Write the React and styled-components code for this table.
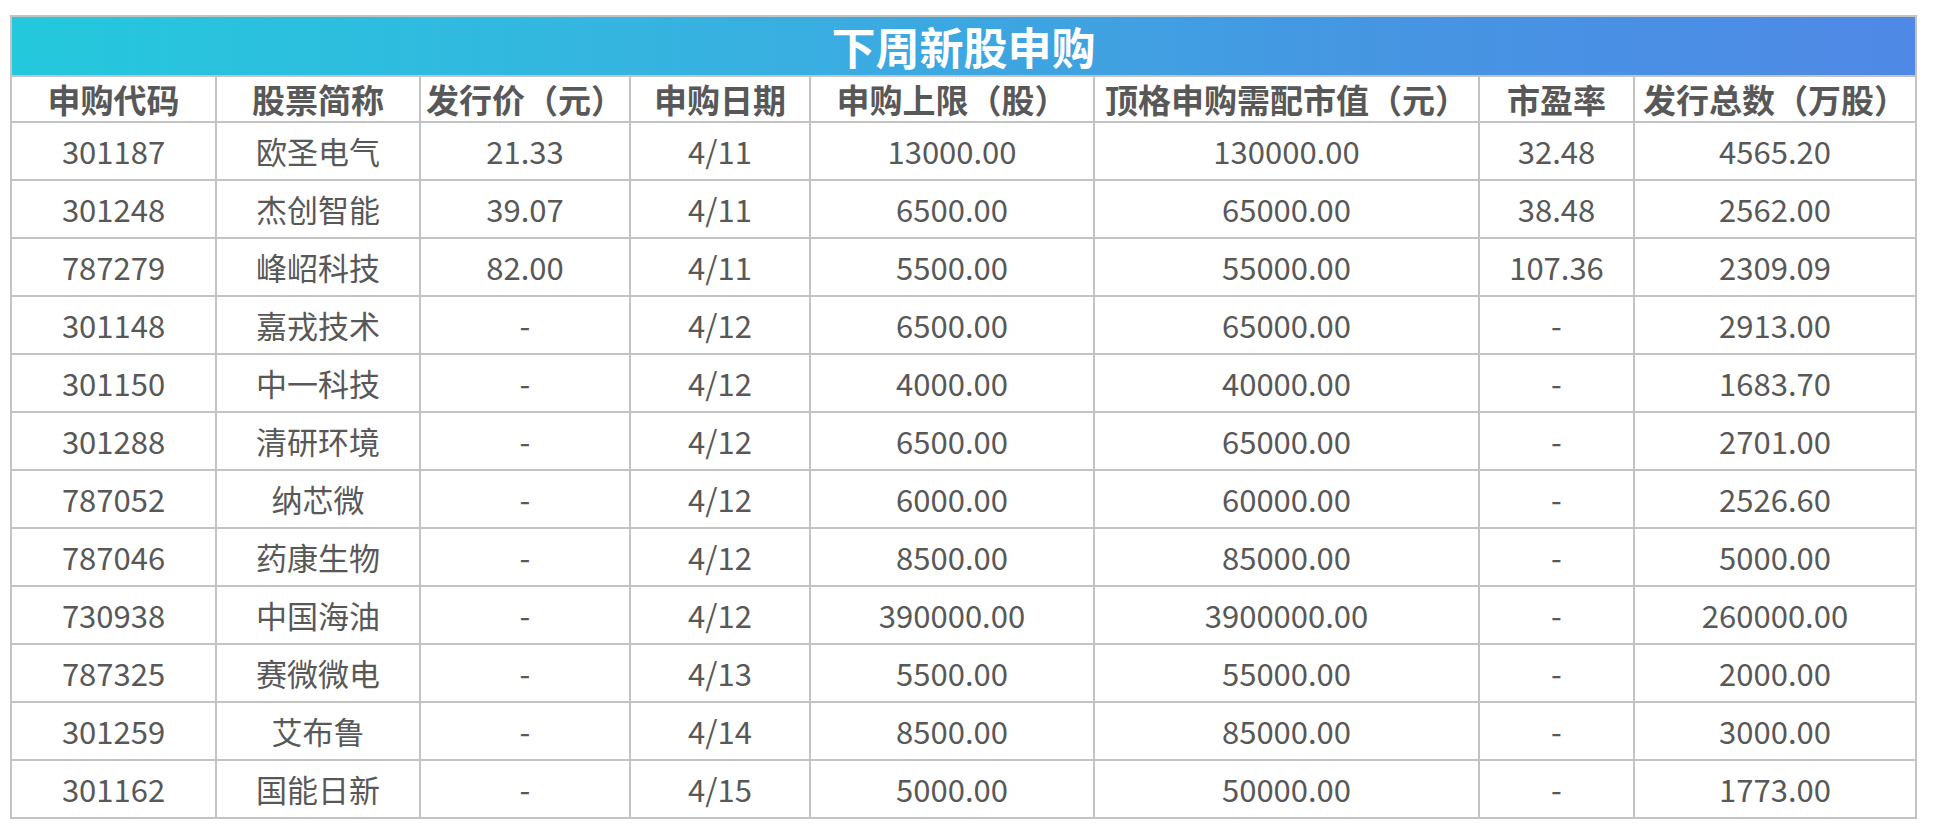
import styled, { createGlobalStyle } from 'styled-components';

const GlobalStyle = createGlobalStyle`
  body {
    margin: 0;
    background: #ffffff;
    font-family: "Noto Sans CJK SC", "Noto Sans", sans-serif;
  }
`;

const columns = [
  { label: '申购代码', width: 205 },
  { label: '股票简称', width: 204 },
  { label: '发行价（元）', width: 210 },
  { label: '申购日期', width: 180 },
  { label: '申购上限（股）', width: 284 },
  { label: '顶格申购需配市值（元）', width: 385 },
  { label: '市盈率', width: 155 },
  { label: '发行总数（万股）', width: 282 },
];

const rows = [
  ['301187', '欧圣电气', '21.33', '4/11', '13000.00', '130000.00', '32.48', '4565.20'],
  ['301248', '杰创智能', '39.07', '4/11', '6500.00', '65000.00', '38.48', '2562.00'],
  ['787279', '峰岹科技', '82.00', '4/11', '5500.00', '55000.00', '107.36', '2309.09'],
  ['301148', '嘉戎技术', '-', '4/12', '6500.00', '65000.00', '-', '2913.00'],
  ['301150', '中一科技', '-', '4/12', '4000.00', '40000.00', '-', '1683.70'],
  ['301288', '清研环境', '-', '4/12', '6500.00', '65000.00', '-', '2701.00'],
  ['787052', '纳芯微', '-', '4/12', '6000.00', '60000.00', '-', '2526.60'],
  ['787046', '药康生物', '-', '4/12', '8500.00', '85000.00', '-', '5000.00'],
  ['730938', '中国海油', '-', '4/12', '390000.00', '3900000.00', '-', '260000.00'],
  ['787325', '赛微微电', '-', '4/13', '5500.00', '55000.00', '-', '2000.00'],
  ['301259', '艾布鲁', '-', '4/14', '8500.00', '85000.00', '-', '3000.00'],
  ['301162', '国能日新', '-', '4/15', '5000.00', '50000.00', '-', '1773.00'],
];

const App = () => {
  return (
    <Page>
      <GlobalStyle />
      <Table>
        <colgroup>
          {columns.map(col => (
            <col key={col.label} style={{ width: col.width }} />
          ))}
        </colgroup>
        <thead>
          <tr>
            <TitleCell colSpan={columns.length}>下周新股申购</TitleCell>
          </tr>
          <tr>
            {columns.map(col => (
              <HeadCell key={col.label}>{col.label}</HeadCell>
            ))}
          </tr>
        </thead>
        <tbody>
          {rows.map(row => (
            <tr key={row[0]}>
              {row.map((value, i) => (
                <Cell key={i}>{value}</Cell>
              ))}
            </tr>
          ))}
        </tbody>
      </Table>
    </Page>
  );
};
export default App;

const Page = styled.div`
  padding: 15px 0 0 10px;
`;

const Table = styled.table`
  width: 1905px;
  table-layout: fixed;
  border-collapse: collapse;
  border: 2px solid #c3c3c3;
  color: #585858;
`;

const TitleCell = styled.th`
  height: 58px;
  padding: 0;
  background: linear-gradient(90deg, #24c8dc 0%, #36b3e0 35%, #4597e2 70%, #4f88e6 100%);
  color: #ffffff;
  font-size: 44px;
  font-weight: 700;
  line-height: 58px;
  text-align: center;
  border: 2px solid #c3c3c3;
`;

const HeadCell = styled.th`
  height: 44px;
  padding: 0;
  font-size: 33px;
  font-weight: 700;
  line-height: 44px;
  text-align: center;
  white-space: nowrap;
  border: 2px solid #c3c3c3;
`;

const Cell = styled.td`
  height: 56px;
  padding: 0;
  font-size: 31px;
  font-weight: 400;
  line-height: 56px;
  text-align: center;
  white-space: nowrap;
  border: 2px solid #c3c3c3;
`;
